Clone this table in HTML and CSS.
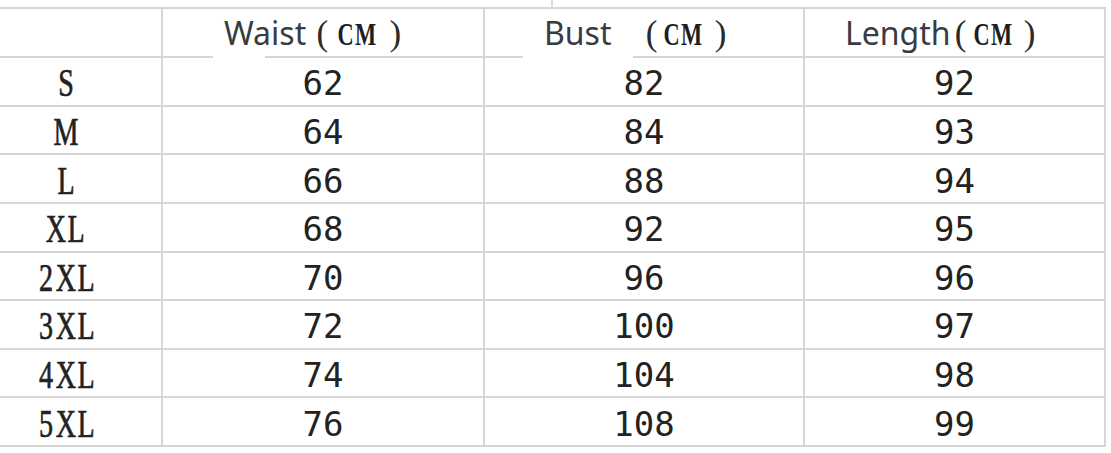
FILE: index.html
```html
<!DOCTYPE html>
<html lang="en">
<head>
<meta charset="utf-8">
<title>Size chart</title>
<link rel="stylesheet" href="styles.css">
</head>
<body>
<div class="page">
  <div class="strip"><div class="strip-cell"></div></div>
  <div class="sheet">
    <div class="cell head"></div>
    <div class="cell head head-waist">
      <span class="hdr"><span class="label">Waist</span><span class="par p-open w-open">(</span><span class="ch c-c w-c">C</span><span class="ch c-m">M</span><span class="par p-close w-close">)</span></span>
      <span class="mask mask-waist"></span>
    </div>
    <div class="cell head head-bust">
      <span class="hdr"><span class="label">Bust</span><span class="par p-open b-open">(</span><span class="ch c-c b-c">C</span><span class="ch c-m">M</span><span class="par p-close b-close">)</span></span>
      <span class="mask mask-bust"></span>
    </div>
    <div class="cell head head-length">
      <span class="hdr"><span class="label">Length</span><span class="par p-open l-open">(</span><span class="ch c-c l-c">C</span><span class="ch c-m">M</span><span class="par p-close l-close">)</span></span>
    </div>

    <div class="cell size"><span class="sz"><span class="ch">S</span></span></div><div class="cell num">62</div><div class="cell num">82</div><div class="cell num">92</div>
    <div class="cell size"><span class="sz"><span class="ch">M</span></span></div><div class="cell num">64</div><div class="cell num">84</div><div class="cell num">93</div>
    <div class="cell size"><span class="sz"><span class="ch">L</span></span></div><div class="cell num">66</div><div class="cell num">88</div><div class="cell num">94</div>
    <div class="cell size"><span class="sz"><span class="ch">X</span><span class="ch">L</span></span></div><div class="cell num">68</div><div class="cell num">92</div><div class="cell num">95</div>
    <div class="cell size"><span class="sz"><span class="ch">2</span><span class="ch">X</span><span class="ch">L</span></span></div><div class="cell num">70</div><div class="cell num">96</div><div class="cell num">96</div>
    <div class="cell size"><span class="sz"><span class="ch">3</span><span class="ch">X</span><span class="ch">L</span></span></div><div class="cell num">72</div><div class="cell num">100</div><div class="cell num">97</div>
    <div class="cell size"><span class="sz"><span class="ch">4</span><span class="ch">X</span><span class="ch">L</span></span></div><div class="cell num">74</div><div class="cell num">104</div><div class="cell num">98</div>
    <div class="cell size"><span class="sz"><span class="ch">5</span><span class="ch">X</span><span class="ch">L</span></span></div><div class="cell num">76</div><div class="cell num">108</div><div class="cell num">99</div>
  </div>
</div>
</body>
</html>
```

FILE: styles.css
```css
html, body {
  margin: 0;
  padding: 0;
  background: #ffffff;
}

.page {
  width: 1111px;
  height: 453px;
  overflow: hidden;
  background: #ffffff;
}

.strip {
  height: 7px;
  display: flex;
}

.strip-cell {
  width: 551px;
  border-right: 2px solid #dcdcdc;
}

.sheet {
  display: grid;
  width: 1106px;
  grid-template-columns: 163px 322px 320px 301px;
  grid-template-rows: 49px repeat(8, 48.625px);
  border-top: 2px solid #d6d6d6;
}

.cell {
  box-sizing: border-box;
  border-right: 2px solid #d6d6d6;
  border-bottom: 2px solid #d6d6d6;
  display: flex;
  align-items: center;
  justify-content: center;
  color: #222222;
}

/* ---------- header ---------- */

.head {
  position: relative;
  justify-content: flex-start;
  padding-top: 8px;
}

.head-waist { padding-left: 61px; }
.head-bust { padding-left: 59px; }
.head-length { padding-left: 40px; }

.hdr {
  display: inline-block;
  white-space: nowrap;
  line-height: 40px;
}

.label {
  font-family: "Noto Sans", "Open Sans", sans-serif;
  font-size: 32px;
  color: #383c42;
}

.par {
  display: inline-flex;
  justify-content: center;
  width: 12px;
  font-family: "Liberation Serif", serif;
  font-size: 35px;
  color: #2a2a2a;
}

.ch {
  display: inline-flex;
  justify-content: center;
  width: 20px;
  transform: scaleX(0.72);
}

.c-c, .c-m {
  font-family: "Liberation Serif", serif;
  font-weight: bold;
  font-size: 32px;
  color: #1e1e1e;
  transform: scaleX(0.7);
}

.c-c { width: 17px; }
.c-m { width: 23px; }

.w-open { margin-left: 10px; }
.w-c { margin-left: 9px; }
.w-close { margin-left: 12px; }

.b-open { margin-left: 34px; }
.b-c { margin-left: 6px; }
.b-close { margin-left: 11px; }

.l-open { margin-left: 4px; }
.l-c { margin-left: 6px; }
.l-close { margin-left: 11px; }

.mask {
  position: absolute;
  bottom: -3px;
  height: 5px;
  background: #ffffff;
  z-index: 2;
}

.mask-waist {
  left: 50px;
  width: 52px;
}

.mask-bust {
  left: 38px;
  width: 110px;
}

/* ---------- body ---------- */

.num {
  font-family: "DejaVu Sans Mono", monospace;
  font-size: 34px;
  padding-top: 4px;
}

.size {
  padding-right: 29px;
  padding-top: 4px;
}

.sz {
  display: inline-flex;
  font-family: "Liberation Serif", serif;
  font-size: 39px;
  line-height: 40px;
  -webkit-text-stroke: 0.7px #222222;
}
```
